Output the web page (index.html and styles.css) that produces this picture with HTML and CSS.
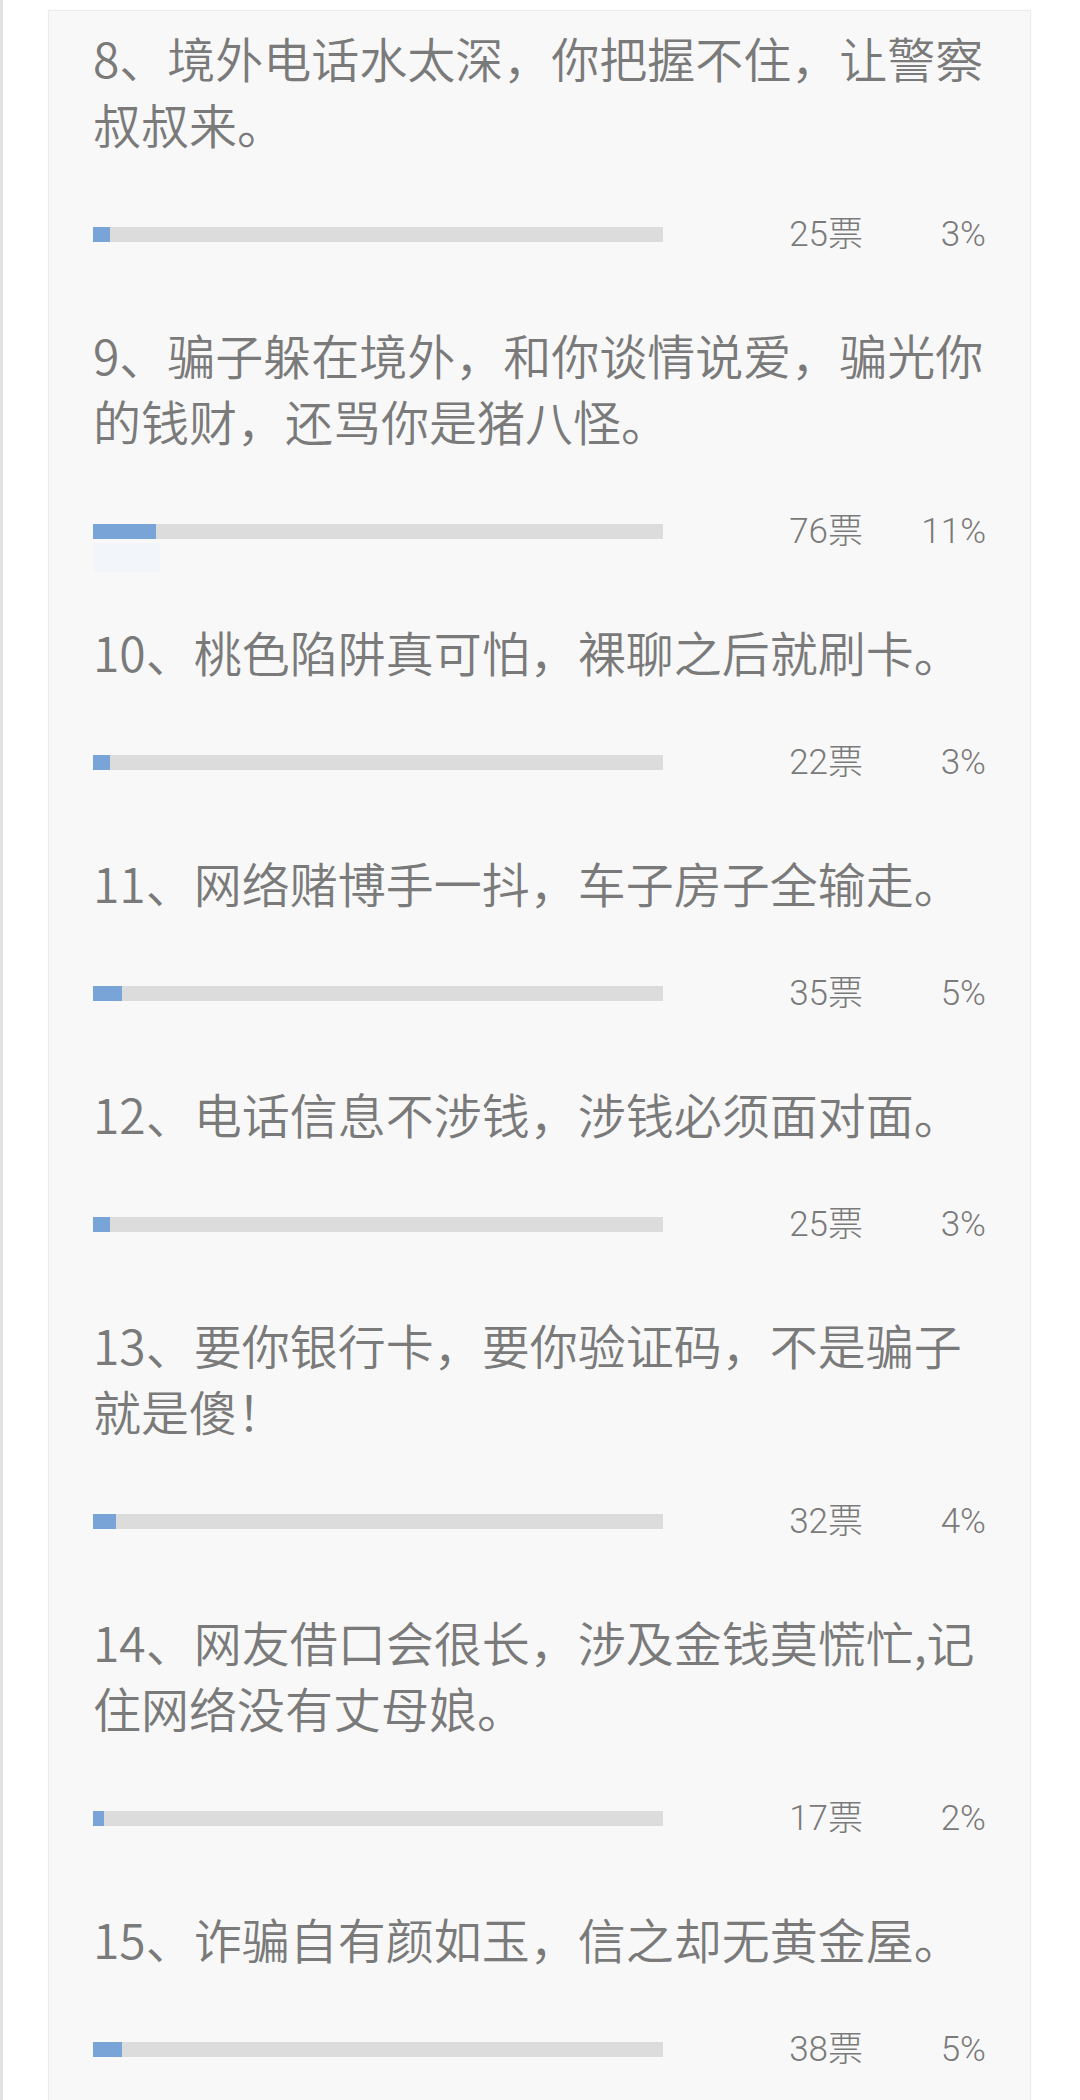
FILE: index.html
```html
<!DOCTYPE html>
<html lang="zh-CN">
<head>
<meta charset="utf-8">
<title>投票结果</title>
<link rel="stylesheet" href="styles.css">
</head>
<body>
<div class="page">
  <div class="card">
    <div class="item">
      <p class="title">8、境外电话水太深，你把握不住，让警察叔叔来。</p>
      <div class="stat">
        <div class="bar"><div class="fill" style="width:3%"></div></div>
        <span class="votes">25票</span>
        <span class="pct">3%</span>
      </div>
    </div>
    <div class="item">
      <p class="title">9、骗子躲在境外，和你谈情说爱，骗光你的钱财，还骂你是猪八怪。</p>
      <div class="stat stat-ghost">
        <div class="bar"><div class="fill" style="width:11%"></div></div>
        <span class="votes">76票</span>
        <span class="pct">11%</span>
      </div>
    </div>
    <div class="item">
      <p class="title">10、桃色陷阱真可怕，裸聊之后就刷卡。</p>
      <div class="stat">
        <div class="bar"><div class="fill" style="width:3%"></div></div>
        <span class="votes">22票</span>
        <span class="pct">3%</span>
      </div>
    </div>
    <div class="item">
      <p class="title">11、网络赌博手一抖，车子房子全输走。</p>
      <div class="stat">
        <div class="bar"><div class="fill" style="width:5%"></div></div>
        <span class="votes">35票</span>
        <span class="pct">5%</span>
      </div>
    </div>
    <div class="item">
      <p class="title">12、电话信息不涉钱，涉钱必须面对面。</p>
      <div class="stat">
        <div class="bar"><div class="fill" style="width:3%"></div></div>
        <span class="votes">25票</span>
        <span class="pct">3%</span>
      </div>
    </div>
    <div class="item">
      <p class="title">13、要你银行卡，要你验证码，不是骗子就是傻！</p>
      <div class="stat">
        <div class="bar"><div class="fill" style="width:4%"></div></div>
        <span class="votes">32票</span>
        <span class="pct">4%</span>
      </div>
    </div>
    <div class="item">
      <p class="title">14、网友借口会很长，涉及金钱莫慌忙,记住网络没有丈母娘。</p>
      <div class="stat">
        <div class="bar"><div class="fill" style="width:2%"></div></div>
        <span class="votes">17票</span>
        <span class="pct">2%</span>
      </div>
    </div>
    <div class="item">
      <p class="title">15、诈骗自有颜如玉，信之却无黄金屋。</p>
      <div class="stat">
        <div class="bar"><div class="fill" style="width:5%"></div></div>
        <span class="votes">38票</span>
        <span class="pct">5%</span>
      </div>
    </div>
  </div>
</div>
</body>
</html>
```

FILE: styles.css
```css
html, body {
  margin: 0;
  padding: 0;
  background: #ffffff;
}

body {
  font-family: "Noto Sans CJK SC", "Noto Sans", sans-serif;
  color: #7e7e7e;
}

.page {
  box-sizing: border-box;
  min-height: 2100px;
  border-left: 3px solid #e2e2e2;
  padding: 10px 49px 0 45px;
}

.card {
  box-sizing: border-box;
  min-height: 2090px;
  background: #f8f8f8;
  border: 1px solid #ebebeb;
  border-bottom: none;
  box-shadow: 0 0 3px rgba(0, 0, 0, 0.04);
  padding: 13px 30px 0 44px;
}

.item {
  margin-bottom: 54px;
}

.item:last-child {
  margin-bottom: 0;
}

.title {
  margin: 0 0 45px;
  font-size: 48px;
  line-height: 66px;
  font-weight: 350;
  color: #7a7a7a;
}

.stat {
  position: relative;
  display: flex;
  align-items: center;
  height: 66px;
}

.stat-ghost::after {
  content: "";
  position: absolute;
  left: 1px;
  top: 45px;
  width: 66px;
  height: 29px;
  background: #f2f6fb;
}

.bar {
  flex: none;
  width: 570px;
  height: 15px;
  background: #dcdcdc;
}

.fill {
  height: 100%;
  background: #79a4d8;
}

.votes,
.pct {
  flex: none;
  text-align: right;
  font-family: Roboto, "Noto Sans CJK SC", sans-serif;
  font-size: 35px;
  line-height: 41px;
  font-weight: 300;
  color: #7a7a7a;
}

.votes {
  width: 200px;
}

.pct {
  width: 123px;
}
```
